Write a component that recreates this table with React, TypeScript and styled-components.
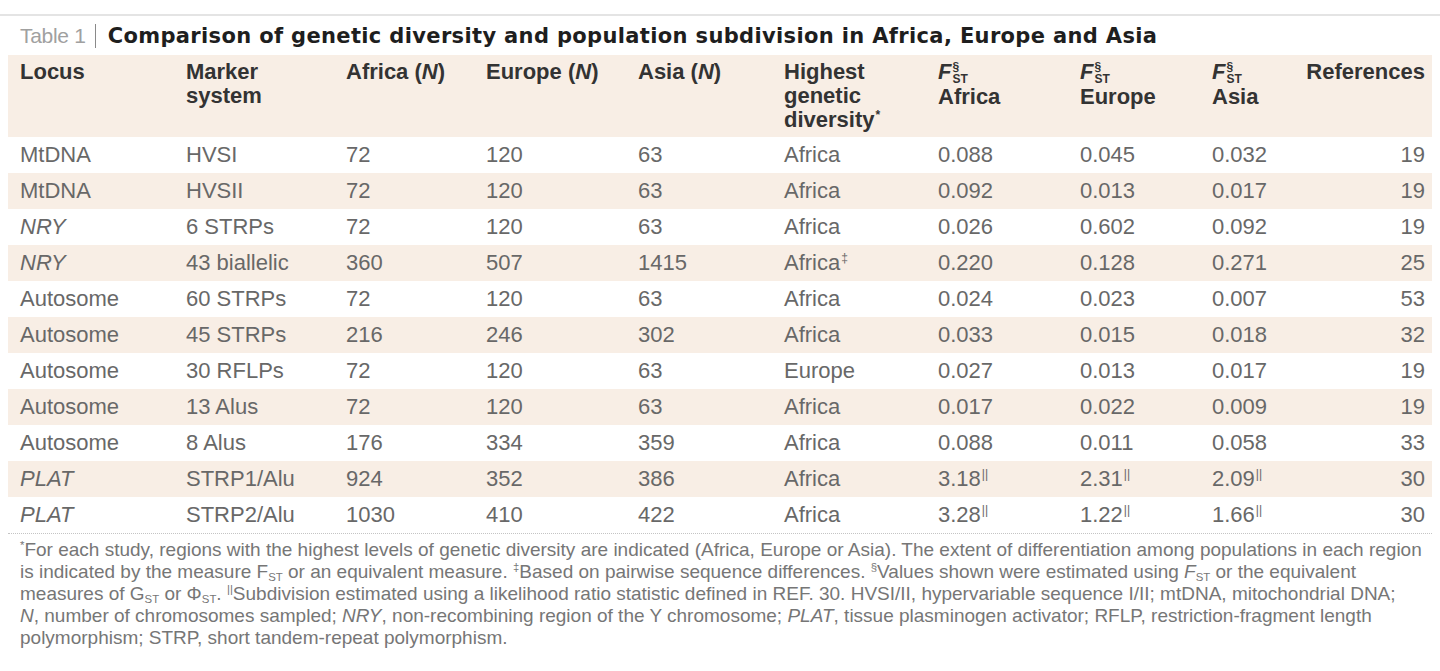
import React from "react";
import styled, { createGlobalStyle } from "styled-components";

const GlobalStyle = createGlobalStyle`
  html, body {
    margin: 0;
    padding: 0;
    background: #ffffff;
  }
  body {
    font-family: "Liberation Sans", Arial, sans-serif;
    color: #5c5c5c;
  }
`;

const beige = "#f8eee5";
const columns = "166px 160px 140px 152px 146px 154px 142px 132px 88px 1fr";

interface Row {
  locus: string;
  italic?: boolean;
  marker: string;
  africa: string;
  europe: string;
  asia: string;
  highest: string;
  highestNote?: string;
  fAfrica: string;
  fEurope: string;
  fAsia: string;
  note?: string;
  refs: string;
}

const rows: Row[] = [
  { locus: "MtDNA", marker: "HVSI", africa: "72", europe: "120", asia: "63", highest: "Africa", fAfrica: "0.088", fEurope: "0.045", fAsia: "0.032", refs: "19" },
  { locus: "MtDNA", marker: "HVSII", africa: "72", europe: "120", asia: "63", highest: "Africa", fAfrica: "0.092", fEurope: "0.013", fAsia: "0.017", refs: "19" },
  { locus: "NRY", italic: true, marker: "6 STRPs", africa: "72", europe: "120", asia: "63", highest: "Africa", fAfrica: "0.026", fEurope: "0.602", fAsia: "0.092", refs: "19" },
  { locus: "NRY", italic: true, marker: "43 biallelic", africa: "360", europe: "507", asia: "1415", highest: "Africa", highestNote: "‡", fAfrica: "0.220", fEurope: "0.128", fAsia: "0.271", refs: "25" },
  { locus: "Autosome", marker: "60 STRPs", africa: "72", europe: "120", asia: "63", highest: "Africa", fAfrica: "0.024", fEurope: "0.023", fAsia: "0.007", refs: "53" },
  { locus: "Autosome", marker: "45 STRPs", africa: "216", europe: "246", asia: "302", highest: "Africa", fAfrica: "0.033", fEurope: "0.015", fAsia: "0.018", refs: "32" },
  { locus: "Autosome", marker: "30 RFLPs", africa: "72", europe: "120", asia: "63", highest: "Europe", fAfrica: "0.027", fEurope: "0.013", fAsia: "0.017", refs: "19" },
  { locus: "Autosome", marker: "13 Alus", africa: "72", europe: "120", asia: "63", highest: "Africa", fAfrica: "0.017", fEurope: "0.022", fAsia: "0.009", refs: "19" },
  { locus: "Autosome", marker: "8 Alus", africa: "176", europe: "334", asia: "359", highest: "Africa", fAfrica: "0.088", fEurope: "0.011", fAsia: "0.058", refs: "33" },
  { locus: "PLAT", italic: true, marker: "STRP1/Alu", africa: "924", europe: "352", asia: "386", highest: "Africa", fAfrica: "3.18", fEurope: "2.31", fAsia: "2.09", note: "||", refs: "30" },
  { locus: "PLAT", italic: true, marker: "STRP2/Alu", africa: "1030", europe: "410", asia: "422", highest: "Africa", fAfrica: "3.28", fEurope: "1.22", fAsia: "1.66", note: "||", refs: "30" },
];

const Page = styled.div`
  padding-top: 14px;
`;

const TopRule = styled.div`
  height: 2px;
  background: #e4e4e4;
`;

const Frame = styled.div`
  padding: 0 8px;
`;

const TitleBar = styled.div`
  display: flex;
  align-items: center;
  height: 39px;
  padding-left: 12px;
  font-size: 21px;
`;

const TableNo = styled.span`
  color: #a0a0a0;
  padding-right: 9px;
  border-right: 1px solid #8a8a8a;
  line-height: 24px;
  letter-spacing: -0.3px;
`;

const TitleText = styled.span`
  font-family: "DejaVu Sans", "Liberation Sans", sans-serif;
  color: #1e1e1e;
  font-weight: bold;
  padding-left: 12px;
  letter-spacing: 0.35px;
`;

const Grid = styled.div<{ $head?: boolean; $shade?: boolean }>`
  display: grid;
  grid-template-columns: ${columns};
  align-items: ${(p) => (p.$head ? "start" : "center")};
  height: ${(p) => (p.$head ? "82px" : "36px")};
  padding-top: ${(p) => (p.$head ? "5px" : "0")};
  box-sizing: border-box;
  background: ${(p) => (p.$shade ? beige : "#ffffff")};
`;

const HeadCell = styled.div<{ $right?: boolean }>`
  padding: 0 7px 0 12px;
  font-size: 22px;
  line-height: 24px;
  font-weight: bold;
  color: #333333;
  text-align: ${(p) => (p.$right ? "right" : "left")};
`;

const Cell = styled.div<{ $right?: boolean; $italic?: boolean }>`
  padding: 0 7px 0 12px;
  font-size: 22px;
  line-height: 24px;
  color: #686868;
  white-space: nowrap;
  font-style: ${(p) => (p.$italic ? "italic" : "normal")};
  text-align: ${(p) => (p.$right ? "right" : "left")};
`;

const Sup = styled.sup`
  font-size: 0.55em;
  line-height: 0;
  vertical-align: 0.7em;
  margin-left: 1px;
`;

const Scripts = styled.span`
  display: inline-flex;
  flex-direction: column;
  vertical-align: 8px;
  font-size: 12px;
  line-height: 12px;
  margin-left: 1px;
`;

const Fst = styled.span`
  font-style: italic;
`;

const Dotted = styled.div`
  height: 0;
  border-top: 1px dotted #c4c4c4;
`;

const Notes = styled.p`
  margin: 0;
  padding: 5px 0 0 12px;
  font-size: 19px;
  line-height: 22px;
  color: #767676;
  white-space: nowrap;
`;

const NoteSub = styled.sub`
  font-size: 0.6em;
  line-height: 0;
  vertical-align: -0.3em;
`;

const NoteSup = styled.sup`
  font-size: 0.6em;
  line-height: 0;
  vertical-align: 0.6em;
`;

const FstHead = ({ label, mark }: { label: string; mark: string }) => (
  <>
    <Fst>F</Fst>
    <Scripts>
      <span>{mark}</span>
      <span>{label}</span>
    </Scripts>
    <br />
  </>
);

const App = () => {
  return (
    <Page>
      <GlobalStyle />
      <TopRule />
      <Frame>
        <TitleBar>
          <TableNo>Table 1</TableNo>
          <TitleText>
            Comparison of genetic diversity and population subdivision in Africa, Europe and Asia
          </TitleText>
        </TitleBar>

        <Grid $head $shade>
          <HeadCell>Locus</HeadCell>
          <HeadCell>
            Marker
            <br />
            system
          </HeadCell>
          <HeadCell>
            Africa (<i>N</i>)
          </HeadCell>
          <HeadCell>
            Europe (<i>N</i>)
          </HeadCell>
          <HeadCell>
            Asia (<i>N</i>)
          </HeadCell>
          <HeadCell>
            Highest
            <br />
            genetic
            <br />
            diversity<Sup>*</Sup>
          </HeadCell>
          <HeadCell>
            <FstHead label="ST" mark="§" />
            Africa
          </HeadCell>
          <HeadCell>
            <FstHead label="ST" mark="§" />
            Europe
          </HeadCell>
          <HeadCell>
            <FstHead label="ST" mark="§" />
            Asia
          </HeadCell>
          <HeadCell $right>References</HeadCell>
        </Grid>

        {rows.map((r, i) => (
          <Grid key={i} $shade={i % 2 === 1}>
            <Cell $italic={r.italic}>{r.locus}</Cell>
            <Cell>{r.marker}</Cell>
            <Cell>{r.africa}</Cell>
            <Cell>{r.europe}</Cell>
            <Cell>{r.asia}</Cell>
            <Cell>
              {r.highest}
              {r.highestNote && <Sup>{r.highestNote}</Sup>}
            </Cell>
            <Cell>
              {r.fAfrica}
              {r.note && <Sup>{r.note}</Sup>}
            </Cell>
            <Cell>
              {r.fEurope}
              {r.note && <Sup>{r.note}</Sup>}
            </Cell>
            <Cell>
              {r.fAsia}
              {r.note && <Sup>{r.note}</Sup>}
            </Cell>
            <Cell $right>{r.refs}</Cell>
          </Grid>
        ))}

        <Dotted />

        <Notes>
          <NoteSup>*</NoteSup>For each study, regions with the highest levels of genetic diversity are indicated
          (Africa, Europe or Asia). The extent of differentiation among populations in each region
          <br />
          is indicated by the measure F<NoteSub>ST</NoteSub> or an equivalent measure. <NoteSup>‡</NoteSup>Based on
          pairwise sequence differences. <NoteSup>§</NoteSup>Values shown were estimated using <i>F</i>
          <NoteSub>ST</NoteSub> or the equivalent
          <br />
          measures of G<NoteSub>ST</NoteSub> or Φ<NoteSub>ST</NoteSub>. <NoteSup>||</NoteSup>Subdivision estimated
          using a likelihood ratio statistic defined in REF. 30. HVSI/II, hypervariable sequence I/II; mtDNA,
          mitochondrial DNA;
          <br />
          <i>N</i>, number of chromosomes sampled; <i>NRY</i>, non-recombining region of the Y chromosome;{" "}
          <i>PLAT</i>, tissue plasminogen activator; RFLP, restriction-fragment length
          <br />
          polymorphism; STRP, short tandem-repeat polymorphism.
        </Notes>
      </Frame>
    </Page>
  );
};

export default App;
